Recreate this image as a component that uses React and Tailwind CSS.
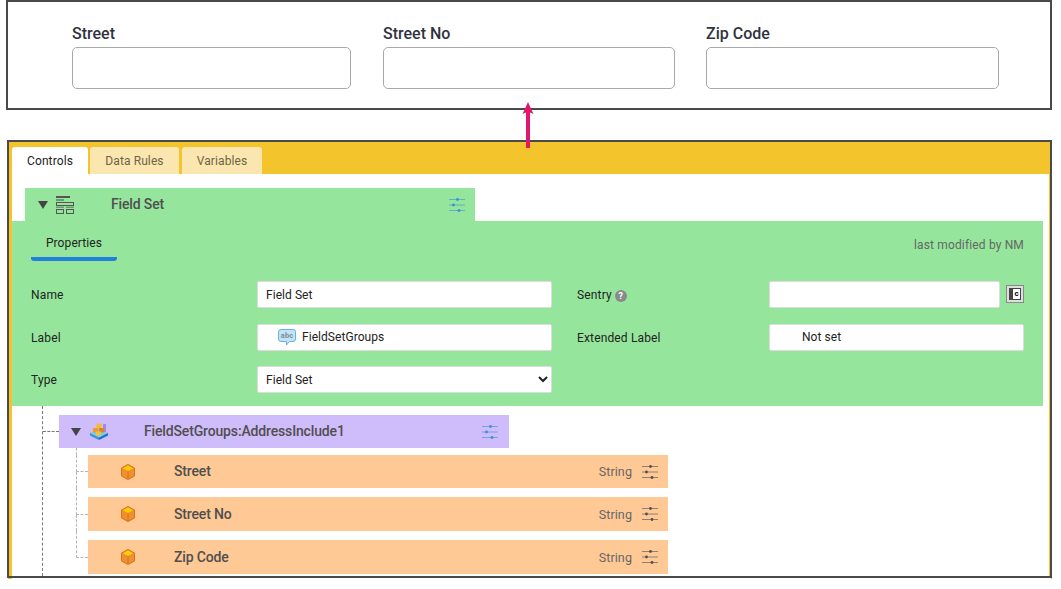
import { useState } from "react";

const FONT = { fontFamily: "Roboto, sans-serif" };

const Sliders = ({ className }) => (
  <svg viewBox="0 0 16 14" className={className} fill="none" stroke="currentColor" strokeWidth="1">
    <path d="M0 1.500h16M0 7h16M0 12.500h16" strokeOpacity="0.6" />
    <circle cx="8.500" cy="1.500" r="1.400" fill="currentColor" stroke="none" />
    <circle cx="4.500" cy="7" r="1.400" fill="currentColor" stroke="none" />
    <circle cx="10" cy="12.500" r="1.400" fill="currentColor" stroke="none" />
  </svg>
);

const Triangle = () => <div className="w-0 h-0 border-x-[5px] border-x-transparent border-t-[8px] border-t-[#444]"></div>;

const FieldSetIcon = () => (
  <svg width="18" height="18" viewBox="0 0 18 18" fill="none" className="ml-[8px]">
    <rect x="0" y="0" width="14" height="2" fill="#555" />
    <rect x="0" y="3" width="8" height="2" fill="#6f9a70" />
    <rect x="0.5" y="6.500" width="17" height="3" stroke="#555" />
    <rect x="0" y="10.500" width="8" height="1.500" fill="#6f9a70" />
    <rect x="10" y="10.500" width="8" height="1.500" fill="#6f9a70" />
    <rect x="0.5" y="13.500" width="7" height="4" stroke="#555" />
    <rect x="10.500" y="13.500" width="7" height="4" stroke="#555" />
  </svg>
);

const GroupIcon = () => (
  <svg width="18" height="17" viewBox="0 0 18 17" className="ml-[9px]">
    <path d="M0 10L9 5.500 18 10 9 14.500z" fill="#7accf2" />
    <path d="M0 10l9 4.500V17L0 12.500z" fill="#2f95de" />
    <path d="M18 10l-9 4.500V17l9-4.500z" fill="#1a72c4" />
    <rect x="13" y="1" width="3" height="8" fill="#a68ad8" />
    <rect x="6.500" y="0.500" width="5" height="4.500" fill="#f6bb2a" />
    <rect x="3" y="5" width="5" height="4.500" fill="#f09a28" />
    <rect x="9" y="5" width="5" height="4.500" fill="#e8801e" />
    <rect x="6" y="8.500" width="5" height="4" fill="#f6c02e" />
  </svg>
);

const CubeIcon = () => (
  <svg width="14" height="16" viewBox="0 0 14 16">
    <path d="M7 0.500L13.500 4v8L7 15.500 0.500 12V4z" fill="#ef8f2e" stroke="#d8701c" />
    <path d="M7 1.500L12 4.200 7 7 2 4.200z" fill="#ffd000" />
    <path d="M7 7v8" stroke="#d8701c" />
  </svg>
);

const AbcIcon = () => (
  <svg width="18" height="17" viewBox="0 0 18 17" className="mr-[6px]">
    <path d="M3 .5h12a2.500 2.500 0 0 1 2.500 2.500v7a2.500 2.500 0 0 1-2.500 2.500h-3.500L8.500 16v-3.500H3A2.500 2.500 0 0 1 .5 10V3A2.500 2.500 0 0 1 3 .5z" fill="#c4e4f6" stroke="#62b4ea" />
    <text x="9" y="9" textAnchor="middle" fontSize="7.500" fontWeight="700" fill="#7d8b96" fontFamily="Roboto, sans-serif">abc</text>
  </svg>
);

const SentryButton = () => (
  <button className="w-[18px] h-[18px] mt-[4px] ml-[6px] shrink-0 border border-[#8a8a8a] bg-[#dedede] p-[2px] flex">
    <span className="flex-1 flex bg-[#444] p-px pl-[4px]">
      <span className="flex-1 bg-white text-black text-[8px] leading-[10px] font-bold text-center">c</span>
    </span>
  </button>
);

const boxClass = "h-[27px] bg-white border border-[#dcdcdc] rounded-[2px] text-[12px] tracking-[0.05px] text-[#222] outline-none";
const labelClass = "text-[12px] leading-[29px] tracking-[0.15px] text-[#222]";
const nameClass = "text-[14px] tracking-[-0.15px] font-medium text-[#4f4f4f]";

// one property row of the tree, connector drawn with dashed borders
const FieldRow = ({ name, last }) => (
  <div className="flex">
    <div className="w-[12px] flex flex-col">
      <div className={`border-l border-b border-dashed border-[#b5b5b5] ${name === "Street" ? "h-[17px]" : "h-[27px]"}`}></div>
      {!last && <div className="flex-1 border-l border-dashed border-[#b5b5b5]"></div>}
    </div>
    <div className={`w-[580px] bg-[#ffc996] flex items-center ${name === "Street" ? "h-[33px]" : "h-[34px] mt-[9px]"}`}>
      <div className="ml-[33px] w-[53px] flex">
        <CubeIcon />
      </div>
      <span className={nameClass}>{name}</span>
      <span className="ml-auto pt-[2px] text-[12.5px] tracking-[0.1px] text-[#666]">String</span>
      <Sliders className="w-[16px] h-[14px] ml-[10px] mr-[10px] text-[#4f4f4f]" />
    </div>
  </div>
);

const TopField = ({ label, width }) => (
  <div className={width}>
    <label className="block text-[16px] leading-[24px] font-medium text-[#2f3340] mb-px">{label}</label>
    <input className="w-full h-[42px] border border-[#a9a9a9] rounded-[5px] bg-white outline-none" />
  </div>
);

export default function App() {
  const [tab] = useState("Controls");
  const tabs = ["Controls", "Data Rules", "Variables"];
  const tabWidths = { Controls: "w-[76px] mr-[2px]", "Data Rules": "w-[89px] mr-[3px]", Variables: "w-[80px]" };

  return (
    <div className="relative w-[1061px] h-[589px] bg-white overflow-hidden" style={FONT}>
      {/* preview of the rendered form */}
      <div className="ml-[6px] w-[1046px] h-[110px] border-2 border-[#4a4a4a] pt-[20px] pl-[64px] flex">
        <TopField label="Street" width="w-[279px]" />
        <div className="ml-[32px]">
          <TopField label="Street No" width="w-[292px]" />
        </div>
        <div className="ml-[31px]">
          <TopField label="Zip Code" width="w-[293px]" />
        </div>
      </div>

      {/* arrow between the two panels */}
      <svg width="12" height="46" viewBox="0 0 12 46" className="absolute left-[522px] top-[102px] z-10">
        <path d="M6 0l5.500 12L8 10.500V46H4V10.500L.5 12z" fill="#e0186c" />
      </svg>

      <div className="ml-[7px] mt-[30px] w-[1045px] h-[438px] border-2 border-[#4a4a4a] bg-[#f4c42c] flex flex-col">
        <div className="h-[32px] pt-[5px] pl-[3px] flex shrink-0">
          {tabs.map((t) => (
            <div
              key={t}
              className={`${tabWidths[t]} h-[27px] rounded-t-[3px] text-[12px] leading-[29px] tracking-[0.1px] text-center ${
                t === tab ? "bg-white text-[#222]" : "bg-[#fbe6b0] text-[#6e6445]"
              }`}
            >
              {t}
            </div>
          ))}
        </div>

        <div className="ml-[3px] mr-[1px] flex-1 min-h-0 bg-white pt-[14px] flex flex-col overflow-hidden">
          <div className="ml-[13px] w-[450px] h-[33px] bg-[#95e69c] flex items-center shrink-0">
            <div className="ml-[13px]">
              <Triangle />
            </div>
            <FieldSetIcon />
            <span className={`ml-[37px] ${nameClass}`}>Field Set</span>
            <Sliders className="w-[16px] h-[14px] ml-auto mr-[10px] text-[#3b8fe0]" />
          </div>

          <div className="w-[1031px] h-[185px] bg-[#95e69c] shrink-0 pt-[14px]">
            <div className="flex justify-between pr-[19px]">
              <div className="ml-[19px] w-[86px] text-center text-[12px] leading-[16px] tracking-[0.1px] text-[#222] pb-[6px] border-b-[4px] border-[#2080dc] rounded-b-[3px]">
                Properties
              </div>
              <span className="text-[12px] leading-[20px] tracking-[0.15px] text-[#666]">last modified by NM</span>
            </div>

            <div className="mt-[20px] pl-[19px] grid grid-cols-[226px_320px_192px_255px] gap-y-[15.5px]">
              <span className={`${labelClass} h-[27px]`}>Name</span>
              <input readOnly value="Field Set" className={`${boxClass} w-[295px] px-[8px]`} />
              <span className={`${labelClass} h-[27px] pt-[2px] flex items-center gap-[3px]`}>
                Sentry
                <span className="w-[12px] h-[12px] rounded-full bg-[#8a8a8a] text-white text-[9px] leading-[12px] font-bold text-center tracking-normal">?</span>
              </span>
              <div className="flex">
                <input readOnly className={`${boxClass} w-[231px]`} />
                <SentryButton />
              </div>

              <span className={`${labelClass} h-[27px]`}>Label</span>
              <div className={`${boxClass} w-[295px] pl-[20px] flex items-center`}>
                <AbcIcon />
                FieldSetGroups
              </div>
              <span className={`${labelClass} h-[27px]`}>Extended Label</span>
              <div className={`${boxClass} w-[255px] pl-[32px] flex items-center`}>Not set</div>

              <span className={`${labelClass} h-[27px]`}>Type</span>
              <select className={`${boxClass} w-[295px] pl-[4px]`} defaultValue="Field Set">
                <option>Field Set</option>
              </select>
            </div>
          </div>

          {/* tree of nested controls */}
          <div className="ml-[30px] flex-1 min-h-0 border-l border-dashed border-[#777] pt-[9px]">
            <div className="flex">
              <div className="w-[16px] h-[17px] border-b border-dashed border-[#777]"></div>
              <div className="w-[450px] h-[33px] bg-[#cfbcfb] flex items-center">
                <div className="ml-[12px]">
                  <Triangle />
                </div>
                <GroupIcon />
                <span className={`ml-[36px] ${nameClass}`}>FieldSetGroups:AddressInclude1</span>
                <Sliders className="w-[16px] h-[14px] ml-auto mr-[11px] text-[#3b8fe0]" />
              </div>
            </div>
            <div className="ml-[33px]">
              <div className="h-[7px] border-l border-dashed border-[#b5b5b5]"></div>
              <FieldRow name="Street" />
              <FieldRow name="Street No" />
              <FieldRow name="Zip Code" last />
            </div>
          </div>
        </div>
      </div>
      <div className="ml-[8px] w-[1044px] h-px flex justify-between">
        <div className="w-[4px] bg-[#f4c42c]"></div>
        <div className="w-px bg-[#f4c42c]"></div>
      </div>
    </div>
  );
}
